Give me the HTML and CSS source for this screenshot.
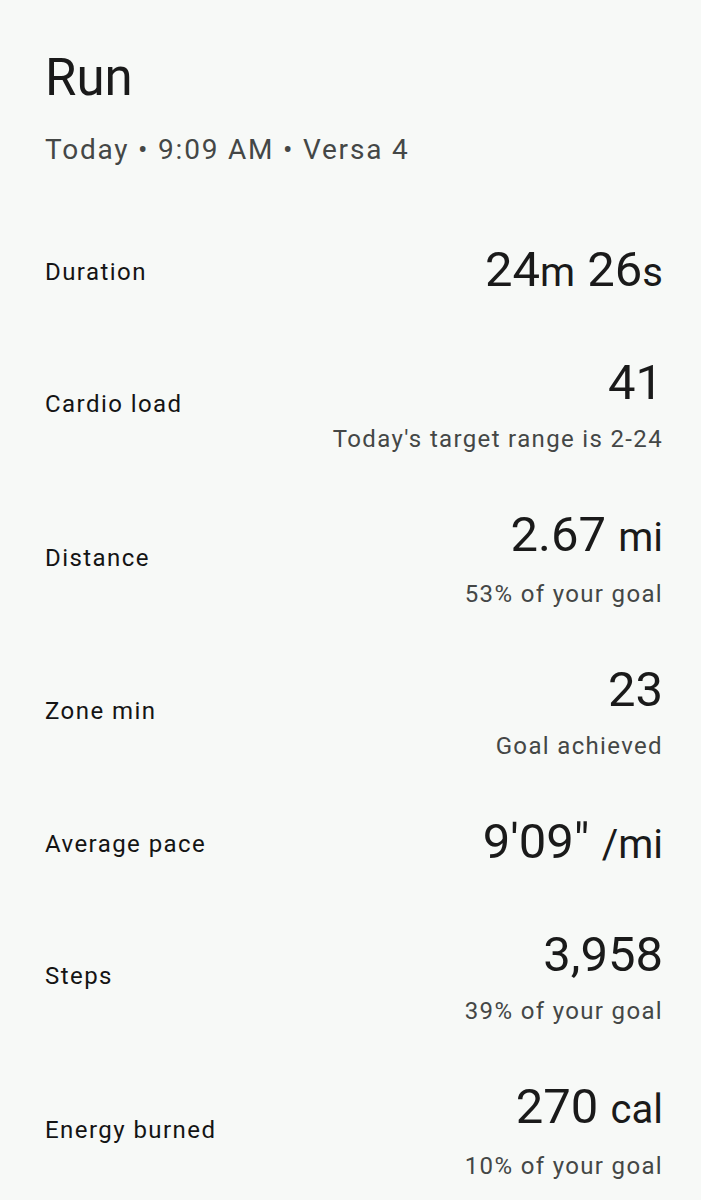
FILE: index.html
```html
<!DOCTYPE html>
<html lang="en">
<head>
  <meta charset="UTF-8">
  <meta name="viewport" content="width=device-width, initial-scale=1">
  <title>Run</title>
  <link rel="stylesheet" href="styles.css">
</head>
<body>

  <header class="header">
    <h1>Run</h1>
    <div class="meta">Today • 9:09 AM • Versa 4</div>
  </header>

  <!-- Statistik latihan -->
  <div class="stats">
    <div class="row">
      <div class="label">Duration</div>
      <div class="stat">
        <div class="value">24<span class="unit">m</span> 26<span class="unit">s</span></div>
      </div>
    </div>
    <div class="row">
      <div class="label">Cardio load</div>
      <div class="stat">
        <div class="value">41</div>
        <div class="note">Today's target range is 2-24</div>
      </div>
    </div>
    <div class="row">
      <div class="label">Distance</div>
      <div class="stat">
        <div class="value">2.67 <span class="unit">mi</span></div>
        <div class="note">53% of your goal</div>
      </div>
    </div>
    <div class="row">
      <div class="label">Zone min</div>
      <div class="stat">
        <div class="value">23</div>
        <div class="note">Goal achieved</div>
      </div>
    </div>
    <div class="row">
      <div class="label">Average pace</div>
      <div class="stat">
        <div class="value">9'09" <span class="unit">/mi</span></div>
      </div>
    </div>
    <div class="row">
      <div class="label">Steps</div>
      <div class="stat">
        <div class="value">3,958</div>
        <div class="note">39% of your goal</div>
      </div>
    </div>
    <div class="row">
      <div class="label">Energy burned</div>
      <div class="stat">
        <div class="value">270 <span class="unit">cal</span></div>
        <div class="note">10% of your goal</div>
      </div>
    </div>
  </div>

</body>
</html>
```

FILE: styles.css
```css
:root {
  --bg: #f7f9f7;
  --text: #1a1a1a;
  --muted: #444746;
}

* {
  box-sizing: border-box;
  margin: 0;
  padding: 0;
}

body {
  font-family: Roboto, 'Noto Sans', sans-serif;
  background: var(--bg);
  color: var(--text);
  padding: 0 38px 0 45px;
}

.header {
  padding-top: 46px;
  padding-bottom: 45px;
}

.header h1 {
  font-size: 51px;
  font-weight: 400;
  line-height: 64px;
}

.meta {
  font-size: 28px;
  line-height: 40px;
  margin-top: 20px;
  letter-spacing: 0.064em;
  color: var(--muted);
}

.row {
  display: flex;
  justify-content: space-between;
  align-items: center;
  padding: 27px 0;
}

.label {
  font-size: 24px;
  font-weight: 400;
  letter-spacing: 0.06em;
  color: #141414;
}

.stat {
  text-align: right;
}

.value {
  font-size: 49px;
  line-height: 56px;
}

.value .unit {
  font-size: 40px;
}

.note {
  font-size: 24px;
  line-height: 28px;
  margin-top: 14px;
  letter-spacing: 0.056em;
  color: var(--muted);
}
```
